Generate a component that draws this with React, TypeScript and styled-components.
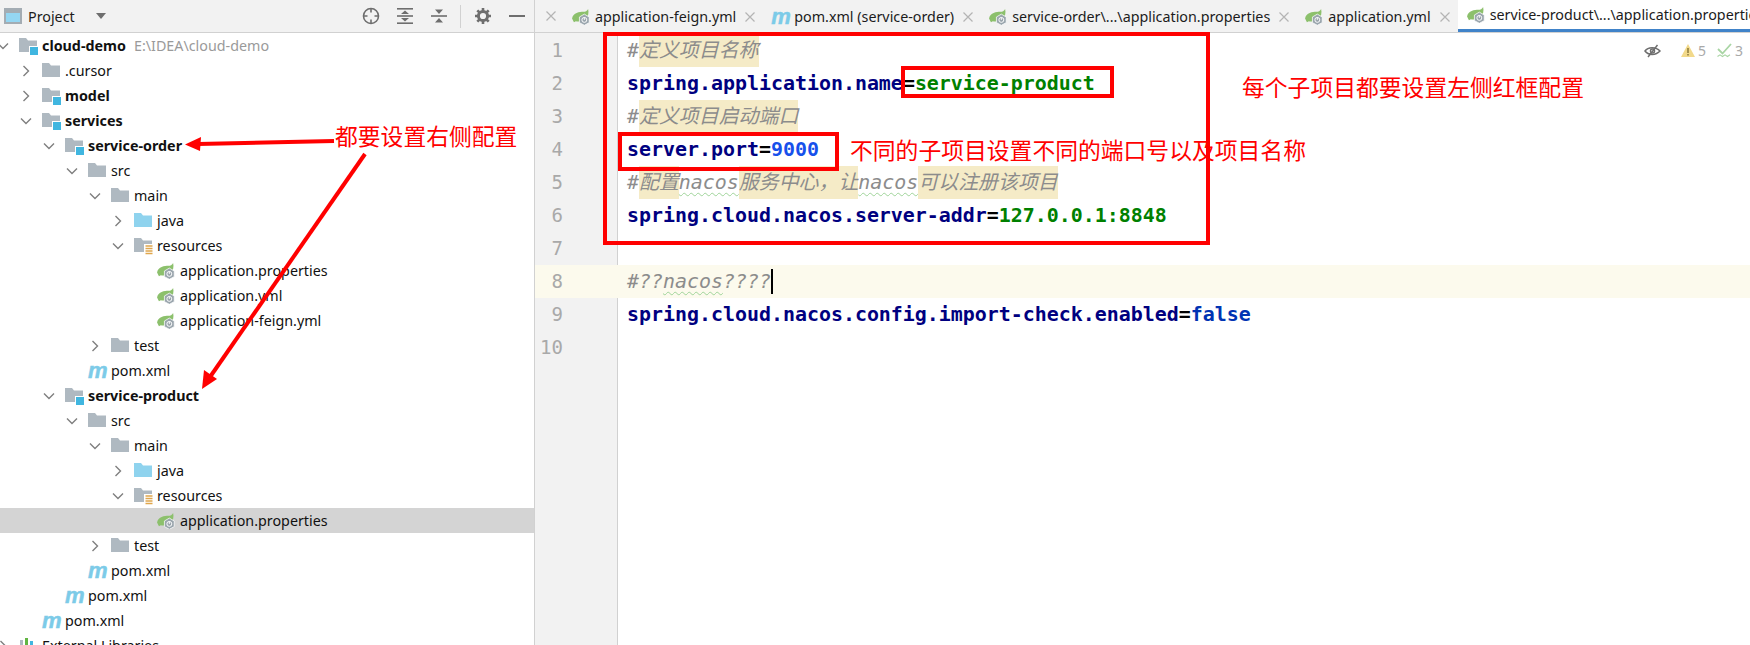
import React from 'react';
import styled, { createGlobalStyle } from 'styled-components';

const uiFont = `"Noto Sans", "Noto Sans CJK SC", sans-serif`;
const codeFont = `"DejaVu Sans Mono", "Noto Sans CJK SC", monospace`;

const GlobalStyle = createGlobalStyle`
    html, body {
        margin: 0;
        padding: 0;
        background: #fff;
        overflow: hidden;
    }
`;

const Page = styled.div`
    position: relative;
    display: flex;
    width: 1750px;
    height: 645px;
    overflow: hidden;
    font-family: ${uiFont};
    color: #000;
`;

/* ---------- project panel ---------- */

const ProjectPanel = styled.div`
    flex: 0 0 534px;
    display: flex;
    flex-direction: column;
    border-right: 1px solid #d1d1d1;
    box-sizing: content-box;
`;

const PanelHeader = styled.div`
    flex: 0 0 32px;
    display: flex;
    align-items: center;
    padding-left: 4px;
    background: #f2f2f2;
    border-bottom: 1px solid #d1d1d1;
`;

const PanelTitle = styled.span`
    margin-left: 6px;
    font-size: 14.3px;
    color: #1c1c1c;
`;

const Caret = styled.span`
    margin-left: 21px;
    width: 0;
    height: 0;
    border: 5px solid transparent;
    border-top: 6px solid #6e6e6e;
    border-bottom: 0;
`;

const HeaderTools = styled.div`
    margin-left: auto;
    display: flex;
    align-items: center;
    padding-right: 9px;
`;

const ToolSlot = styled.span<{ $gap: number }>`
    display: flex;
    margin-left: ${(p) => p.$gap}px;
`;

const ToolDivider = styled.span`
    width: 1px;
    height: 23px;
    margin-left: 13px;
    background: #d1d1d1;
`;

const Tree = styled.div`
    flex: 1;
    overflow: hidden;
`;

const Row = styled.div<{ $selected?: boolean }>`
    display: flex;
    align-items: center;
    height: 25px;
    background: ${(p) => (p.$selected ? '#d4d4d4' : 'transparent')};
    font-size: 14.3px;
    white-space: nowrap;
`;

const ArrowSlot = styled.span<{ $level: number }>`
    flex: 0 0 18px;
    display: flex;
    justify-content: center;
    margin-left: ${(p) => p.$level * 23 - 6}px;
    margin-right: 7px;
`;

const IconSlot = styled.span`
    flex: 0 0 18px;
    min-width: 0;
    height: 18px;
    display: flex;
    align-items: center;
    justify-content: flex-start;
`;

const IconSvg = styled.svg`
    flex: none;
`;

const Label = styled.span<{ $bold?: boolean }>`
    margin-left: 5px;
    font-weight: ${(p) => (p.$bold ? 700 : 400)};
    color: #111;
`;

const Hint = styled.span`
    margin-left: 8px;
    color: #9a9a9a;
`;

const MavenMark = styled.span`
    font-family: "Liberation Sans", sans-serif;
    font-style: italic;
    font-weight: 700;
    font-size: 22px;
    line-height: 18px;
    color: #7ccbe8;
    -webkit-text-stroke: 0.5px #7ccbe8;
`;

/* ---------- editor ---------- */

const EditorPane = styled.div`
    flex: 1;
    min-width: 0;
    display: flex;
    flex-direction: column;
    position: relative;
`;

const TabBar = styled.div`
    flex: 0 0 32px;
    display: flex;
    align-items: center;
    overflow: hidden;
    background: #f2f2f2;
    border-bottom: 1px solid #d1d1d1;
    padding-left: 9px;
`;

const Tab = styled.div<{ $active?: boolean }>`
    flex: none;
    display: flex;
    align-items: center;
    align-self: stretch;
    margin-bottom: -1px;
    padding: 0 0 0 ${(p) => (p.$active ? 9 : 8)}px;
    background: ${(p) => (p.$active ? '#fff' : 'transparent')};
    border-bottom: ${(p) => (p.$active ? '4px solid #4083c9' : '0')};
    font-size: 14.3px;
    white-space: nowrap;
    color: #1c1c1c;
`;

const TabClose = styled.span`
    display: flex;
    margin-left: 8px;
    margin-right: 7px;
`;

const TabText = styled.span`
    margin-left: 5px;
`;

const LeadClose = styled.span`
    display: flex;
    margin-left: 1px;
    margin-right: 7px;
`;

const EditorBody = styled.div`
    flex: 1;
    display: flex;
    flex-direction: column;
    padding-top: 1px;
    font-family: ${codeFont};
    font-size: 19.93px;
    background: linear-gradient(90deg, #f2f2f2 0 82px, #d1d1d1 82px 83px, #fff 83px);
`;

const CodeLine = styled.div<{ $current?: boolean }>`
    display: flex;
    height: 33px;
    line-height: 33px;
    background: ${(p) => (p.$current ? '#fcfaed' : 'transparent')};
    white-space: pre;
`;

const LineNo = styled.span`
    flex: 0 0 28px;
    padding-right: 55px;
    text-align: right;
    font-size: 19px;
    color: #a9a9a9;
`;

const LineText = styled.span`
    position: relative;
    margin-left: 9px;
`;

const Key = styled.span`
    color: #000080;
    font-weight: 700;
`;

const Eq = styled.span`
    color: #000;
    font-weight: 700;
`;

const Str = styled.span`
    color: #008000;
    font-weight: 700;
`;

const Num = styled.span`
    color: #1750eb;
    font-weight: 700;
`;

const Bool = styled.span`
    color: #0033b3;
    font-weight: 700;
`;

const Comment = styled.span`
    color: #8c8c8c;
    font-style: italic;
`;

const Mark = styled.span`
    display: inline-block;
    height: 33px;
    background: #f5ebc7;
`;

const Typo = styled.span`
    text-decoration: underline wavy #9fd49a 1px;
    text-underline-offset: 3px;
`;

const Caretbar = styled.span`
    display: inline-block;
    width: 2px;
    height: 25px;
    margin-bottom: -6px;
    background: #000;
`;

const Inspections = styled.div`
    position: absolute;
    top: 41px;
    right: 7px;
    display: flex;
    align-items: center;
    font-size: 14px;
    color: #a9a9a9;
`;

const InspectionCount = styled.span`
    margin-left: 3px;
    &:not(:last-child) {
        margin-right: 11px;
    }
`;

const EyeSlot = styled.span`
    display: flex;
    margin-right: 20px;
`;

/* ---------- red annotations on top ---------- */

const RedBox = styled.div<{ $x: number; $y: number; $w: number; $h: number }>`
    position: absolute;
    left: ${(p) => p.$x}px;
    top: ${(p) => p.$y}px;
    width: ${(p) => p.$w}px;
    height: ${(p) => p.$h}px;
    box-sizing: border-box;
    border: 4px solid #ff0000;
`;

const Note = styled.div<{ $x: number; $y: number }>`
    position: absolute;
    left: ${(p) => p.$x}px;
    top: ${(p) => p.$y}px;
    font-family: "Noto Sans CJK SC", sans-serif;
    font-size: 22.8px;
    line-height: 30px;
    color: #ff0000;
    white-space: nowrap;
`;

const ArrowLayer = styled.svg`
    position: absolute;
    left: 0;
    top: 0;
    pointer-events: none;
`;

/* ---------- icons ---------- */

const Chevron = ({ open }: { open: boolean }) => (
    <svg width="14" height="14" viewBox="0 0 14 14" fill="none" stroke="#7f7f7f" strokeWidth="1.4">
        {open ? <path d="M2 4.5 7 9.5 12 4.5" /> : <path d="M4.5 2 9.5 7 4.5 12" />}
    </svg>
);

const Folder = ({ color = '#afb9c1', badge }: { color?: string; badge?: 'module' | 'resources' }) => (
    <IconSvg width="19" height="18" viewBox="0 0 19 18">
        <path d="M0 1h7l2 2.5h9V15H0z" fill={color} />
        {badge === 'module' && (
            <>
                <rect x="10" y="9" width="9" height="9" fill="#fff" />
                <rect x="11" y="10" width="8" height="8" fill="#40b6e0" />
            </>
        )}
        {badge === 'resources' && (
            <>
                <rect x="10" y="7" width="9" height="11" fill="#fff" />
                <path d="M11.5 9h7M11.5 11.5h7M11.5 14h7M11.5 16.5h7" stroke="#e0a64c" strokeWidth="1.4" />
            </>
        )}
    </IconSvg>
);

const SpringFile = () => (
    <IconSvg width="19" height="17" viewBox="0 0 20 18">
        <path d="M0 11C1 5 8 4 12 4c2 0 4-1 5-3 1 4 0 8-2 10-4 3-8 4-11 3l-2 1z" fill="#8cc06c" />
        <path d="M13 6.5 18.2 9.5v6L13 18.3 7.8 15.5v-6z" fill="#9aa5ad" stroke="#fff" strokeWidth="0.8" />
        <circle cx="13" cy="12.6" r="2.6" fill="none" stroke="#fff" strokeWidth="1" />
        <path d="M13 10v2.6" stroke="#fff" strokeWidth="1" />
    </IconSvg>
);

const Libraries = () => (
    <svg width="18" height="18" viewBox="0 0 18 18">
        <rect x="1" y="3" width="3" height="14" fill="#afb9c1" />
        <rect x="6" y="1" width="3" height="16" fill="#62b543" />
        <rect x="11" y="4" width="3" height="13" fill="#40b6e0" />
    </svg>
);

const ProjectGlyph = () => (
    <svg width="18" height="16" viewBox="0 0 18 16">
        <rect width="18" height="16" fill="#a3acb3" />
        <rect x="2" y="5" width="14" height="9" fill="#94d6f2" />
    </svg>
);

const Locate = () => (
    <svg width="18" height="18" viewBox="0 0 18 18" fill="none" stroke="#6e6e6e" strokeWidth="1.6">
        <circle cx="9" cy="9" r="7.5" />
        <path d="M9 1.5v4M9 12.5v4M1.5 9h4M12.5 9h4" />
    </svg>
);

const ExpandAll = () => (
    <svg width="16" height="18" viewBox="0 0 16 18" fill="#6e6e6e">
        <rect x="0" y="1" width="16" height="1.6" />
        <rect x="0" y="15.4" width="16" height="1.6" />
        <rect x="0" y="8.2" width="16" height="1.6" />
        <path d="M8 3.5 12 7H4zM8 14.5 4 11h8z" />
    </svg>
);

const CollapseAll = () => (
    <svg width="16" height="18" viewBox="0 0 16 18" fill="#6e6e6e">
        <rect x="0" y="8.2" width="16" height="1.6" />
        <path d="M8 7 4 2.5h8zM8 11 12 15.5H4z" />
    </svg>
);

const Gear = () => (
    <svg width="16" height="16" viewBox="0 0 16 16">
        <circle cx="8" cy="8" r="4.6" fill="none" stroke="#6e6e6e" strokeWidth="3" />
        <path d="M8 0v3M8 13v3M0 8h3M13 8h3M2.3 2.3l2.2 2.2M11.5 11.5l2.2 2.2M2.3 13.7l2.2-2.2M11.5 4.5l2.2-2.2" stroke="#6e6e6e" strokeWidth="2.6" />
    </svg>
);

const Minimize = () => (
    <svg width="16" height="4" viewBox="0 0 16 4">
        <rect y="1" width="16" height="2" fill="#6e6e6e" />
    </svg>
);

const CloseX = () => (
    <svg width="12" height="12" viewBox="0 0 12 12" stroke="#b4b4b4" strokeWidth="1.2">
        <path d="M1.5 1.5 10.5 10.5M10.5 1.5 1.5 10.5" />
    </svg>
);

const EyeOff = () => (
    <svg width="17" height="14" viewBox="0 0 17 14" fill="none" stroke="#6e6e6e" strokeWidth="1.5">
        <path d="M1 7c3-4.5 11-4.5 15 0-4 4.5-12 4.5-15 0z" />
        <circle cx="8.5" cy="7" r="2" />
        <path d="M13.5 1 4 13" />
    </svg>
);

const WarnIcon = () => (
    <svg width="14" height="13" viewBox="0 0 14 13">
        <path d="M7 0 14 13H0z" fill="#f2d98a" />
        <path d="M7 4v5M7 10v1.5" stroke="#7a6a30" strokeWidth="1.3" />
    </svg>
);

const CheckIcon = () => (
    <svg width="15" height="15" viewBox="0 0 15 15" fill="none" stroke="#a9d5a4" strokeWidth="1.8">
        <path d="M1 6 5.5 10.5 14 1" />
        <path d="M0.5 13.5 3 11.8l2.5 1.7L8 11.8l2.5 1.7 2.5-1.7" strokeWidth="1.1" />
    </svg>
);

/* ---------- data ---------- */

type IconKind = 'module' | 'folder' | 'source' | 'resources' | 'spring' | 'maven' | 'libs';

interface TreeItem {
    level: number;
    arrow?: 'open' | 'closed';
    icon: IconKind;
    label: string;
    bold?: boolean;
    hint?: string;
    selected?: boolean;
}

const tree: TreeItem[] = [
    { level: 0, arrow: 'open', icon: 'module', label: 'cloud-demo', bold: true, hint: 'E:\\IDEA\\cloud-demo' },
    { level: 1, arrow: 'closed', icon: 'folder', label: '.cursor' },
    { level: 1, arrow: 'closed', icon: 'module', label: 'model', bold: true },
    { level: 1, arrow: 'open', icon: 'module', label: 'services', bold: true },
    { level: 2, arrow: 'open', icon: 'module', label: 'service-order', bold: true },
    { level: 3, arrow: 'open', icon: 'folder', label: 'src' },
    { level: 4, arrow: 'open', icon: 'folder', label: 'main' },
    { level: 5, arrow: 'closed', icon: 'source', label: 'java' },
    { level: 5, arrow: 'open', icon: 'resources', label: 'resources' },
    { level: 6, icon: 'spring', label: 'application.properties' },
    { level: 6, icon: 'spring', label: 'application.yml' },
    { level: 6, icon: 'spring', label: 'application-feign.yml' },
    { level: 4, arrow: 'closed', icon: 'folder', label: 'test' },
    { level: 3, icon: 'maven', label: 'pom.xml' },
    { level: 2, arrow: 'open', icon: 'module', label: 'service-product', bold: true },
    { level: 3, arrow: 'open', icon: 'folder', label: 'src' },
    { level: 4, arrow: 'open', icon: 'folder', label: 'main' },
    { level: 5, arrow: 'closed', icon: 'source', label: 'java' },
    { level: 5, arrow: 'open', icon: 'resources', label: 'resources' },
    { level: 6, icon: 'spring', label: 'application.properties', selected: true },
    { level: 4, arrow: 'closed', icon: 'folder', label: 'test' },
    { level: 3, icon: 'maven', label: 'pom.xml' },
    { level: 2, icon: 'maven', label: 'pom.xml' },
    { level: 1, icon: 'maven', label: 'pom.xml' },
    { level: 0, arrow: 'closed', icon: 'libs', label: 'External Libraries' },
];

const tabs: { icon: 'spring' | 'maven'; label: string; active?: boolean }[] = [
    { icon: 'spring', label: 'application-feign.yml' },
    { icon: 'maven', label: 'pom.xml (service-order)' },
    { icon: 'spring', label: 'service-order\\...\\application.properties' },
    { icon: 'spring', label: 'application.yml' },
    { icon: 'spring', label: 'service-product\\...\\application.properties', active: true },
];

const renderIcon = (icon: IconKind) => {
    switch (icon) {
        case 'module':
            return <Folder badge="module" />;
        case 'source':
            return <Folder color="#8fd3ee" />;
        case 'resources':
            return <Folder badge="resources" />;
        case 'spring':
            return <SpringFile />;
        case 'maven':
            return <MavenMark>m</MavenMark>;
        case 'libs':
            return <Libraries />;
        default:
            return <Folder />;
    }
};

const codeLines: React.ReactNode[] = [
    <Comment>#<Mark>定义项目名称</Mark></Comment>,
    <><Key>spring.application.name</Key><Eq>=</Eq><Str>service-product</Str></>,
    <Comment>#<Mark>定义项目启动端口</Mark></Comment>,
    <><Key>server.port</Key><Eq>=</Eq><Num>9000</Num></>,
    <Comment>#<Mark>配置</Mark><Typo>nacos</Typo><Mark>服务中心，让</Mark><Typo>nacos</Typo><Mark>可以注册该项目</Mark></Comment>,
    <><Key>spring.cloud.nacos.server-addr</Key><Eq>=</Eq><Str>127.0.0.1:8848</Str></>,
    null,
    <><Comment>#??<Typo>nacos</Typo>????</Comment><Caretbar /></>,
    <><Key>spring.cloud.nacos.config.import-check.enabled</Key><Eq>=</Eq><Bool>false</Bool></>,
    null,
];

export default function App() {
    return (
        <Page>
            <GlobalStyle />
            <ProjectPanel>
                <PanelHeader>
                    <ProjectGlyph />
                    <PanelTitle>Project</PanelTitle>
                    <Caret />
                    <HeaderTools>
                        <Locate />
                        <ToolSlot $gap={17}><ExpandAll /></ToolSlot>
                        <ToolSlot $gap={18}><CollapseAll /></ToolSlot>
                        <ToolDivider />
                        <ToolSlot $gap={14}><Gear /></ToolSlot>
                        <ToolSlot $gap={18}><Minimize /></ToolSlot>
                    </HeaderTools>
                </PanelHeader>
                <Tree>
                    {tree.map((item, i) => (
                        <Row key={i} $selected={item.selected}>
                            <ArrowSlot $level={item.level}>
                                {item.arrow && <Chevron open={item.arrow === 'open'} />}
                            </ArrowSlot>
                            <IconSlot>{renderIcon(item.icon)}</IconSlot>
                            <Label $bold={item.bold}>{item.label}</Label>
                            {item.hint && <Hint>{item.hint}</Hint>}
                        </Row>
                    ))}
                </Tree>
            </ProjectPanel>
            <EditorPane>
                <TabBar>
                    <LeadClose><CloseX /></LeadClose>
                    {tabs.map((tab) => (
                        <Tab key={tab.label} $active={tab.active}>
                            <IconSlot>
                                {tab.icon === 'maven' ? <MavenMark>m</MavenMark> : <SpringFile />}
                            </IconSlot>
                            <TabText>{tab.label}</TabText>
                            {!tab.active && <TabClose><CloseX /></TabClose>}
                        </Tab>
                    ))}
                </TabBar>
                <EditorBody>
                    {codeLines.map((line, i) => (
                        <CodeLine key={i} $current={i === 7}>
                            <LineNo>{i + 1}</LineNo>
                            <LineText>{line}</LineText>
                        </CodeLine>
                    ))}
                </EditorBody>
                <Inspections>
                    <EyeSlot><EyeOff /></EyeSlot>
                    <WarnIcon />
                    <InspectionCount>5</InspectionCount>
                    <CheckIcon />
                    <InspectionCount>3</InspectionCount>
                </Inspections>
            </EditorPane>

            <RedBox $x={603} $y={32} $w={607} $h={213} />
            <RedBox $x={901} $y={66} $w={213} $h={32} />
            <RedBox $x={618} $y={132} $w={221} $h={39} />
            <Note $x={1242} $y={72}>每个子项目都要设置左侧红框配置</Note>
            <Note $x={850} $y={135}>不同的子项目设置不同的端口号以及项目名称</Note>
            <Note $x={335} $y={121}>都要设置右侧配置</Note>
            <ArrowLayer width="1750" height="645" viewBox="0 0 1750 645">
                <path d="M334 141 198 144" stroke="#ff0000" strokeWidth="4" fill="none" />
                <path d="M185 144.5 201 137 200 151z" fill="#ff0000" />
                <path d="M365 154 210 377" stroke="#ff0000" strokeWidth="4" fill="none" />
                <path d="M202 389 204 370 217 379z" fill="#ff0000" />
            </ArrowLayer>
        </Page>
    );
}
